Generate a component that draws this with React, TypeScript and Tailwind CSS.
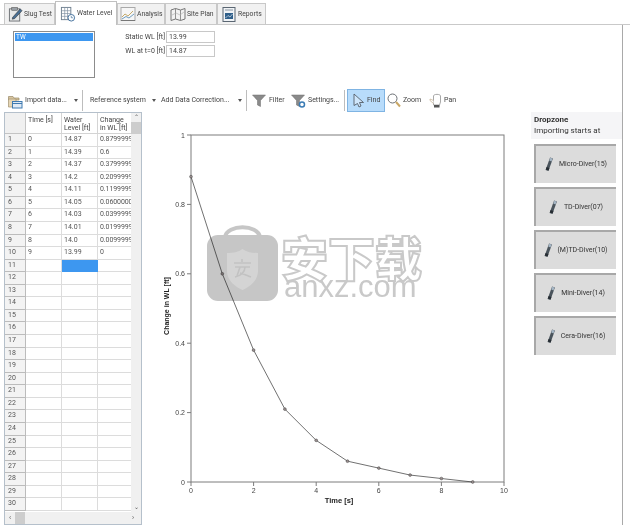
import React from "react";

const font = { fontFamily: 'Roboto, "Noto Sans CJK SC", sans-serif' };

function SlugIcon() {
  return (
    <svg width="15" height="16" viewBox="0 0 16 17" fill="none" className="shrink-0">
      <rect x="1.500" y="3" width="11" height="13" fill="#e8e8e8" stroke="#6d7175" />
      <rect x="4" y="1.500" width="6" height="3" fill="#9aa0a6" stroke="#555" strokeWidth="0.6" />
      <path d="M5 12 L13 3 L15 5 L7 13.500 L4.500 14 Z" fill="#4a6f94" stroke="#333" strokeWidth="0.6" />
    </svg>
  );
}
function LevelIcon() {
  return (
    <svg width="16" height="16" viewBox="0 0 17 17" fill="none" className="shrink-0">
      <rect x="1.500" y="1.500" width="10" height="13" fill="#fff" stroke="#6f7f8f" />
      <path d="M1.500 5H11.500M1.500 8H11.500M1.500 11H11.500M5 1.500V14.500M8 1.500V14.500" stroke="#7d8ea0" strokeWidth="0.7" />
      <circle cx="12" cy="12.500" r="3.500" fill="#fff" stroke="#3d6c99" />
      <path d="M12 10.500V12.500H14" stroke="#3d6c99" strokeWidth="0.7" />
    </svg>
  );
}
function AnalysisIcon() {
  return (
    <svg width="16" height="16" viewBox="0 0 16 16" fill="none" className="shrink-0">
      <rect x="1" y="1.500" width="14" height="13" fill="#f6f6f6" stroke="#a9a9a9" />
      <path d="M2 11L5 8L8 10L13 5" stroke="#c0a25a" strokeWidth="0.9" />
      <path d="M2 13L6 10.500L9 12L14 8" stroke="#5f92b8" strokeWidth="0.9" />
      <path d="M1 14.500H15" stroke="#777" />
    </svg>
  );
}
function MapIcon() {
  return (
    <svg width="16" height="15" viewBox="0 0 16 15" fill="none" className="shrink-0">
      <path d="M1 3L5.500 1.500L10.500 3L15 1.500V12L10.500 13.500L5.500 12L1 13.500Z" fill="#f2f2f2" stroke="#777" />
      <path d="M5.500 1.500V12M10.500 3V13.500" stroke="#777" strokeWidth="0.8" />
      <path d="M2 8L6 6L10 8L14 5" stroke="#aaa" strokeWidth="0.6" />
    </svg>
  );
}
function ReportIcon() {
  return (
    <svg width="14" height="15" viewBox="0 0 14 15" fill="none" className="shrink-0">
      <rect x="1" y="0.500" width="12" height="14" fill="#f0f3f6" stroke="#5a6672" />
      <rect x="3" y="6" width="8" height="6" fill="#2f5f8a" />
      <path d="M3.500 11L6 8.500L8 10L10.500 7" stroke="#dce7f0" strokeWidth="0.7" />
      <path d="M3 3H11" stroke="#8a96a2" />
    </svg>
  );
}
function FolderIcon() {
  return (
    <svg width="15" height="16" viewBox="0 0 15 16" fill="none" className="shrink-0">
      <path d="M0.500 3.500H5L6 5H11V7H0.500Z" fill="#d9c6a0" stroke="#9a8a68" strokeWidth="0.7" />
      <path d="M0.500 6L0.500 14H8V6Z" fill="#e6d6b5" stroke="#a0906e" strokeWidth="0.7" />
      <rect x="4.500" y="8.500" width="9.500" height="6.500" fill="#dfeaf5" stroke="#3f7ab0" />
      <path d="M4.500 10.500H14" stroke="#3f7ab0" />
    </svg>
  );
}
function Funnel({ gear }: { gear?: boolean }) {
  return (
    <svg width="15" height="14" viewBox="0 0 15 14" fill="none" className="shrink-0">
      <path d="M0.500 1H13.500L8.500 6.500V12.500L5.500 11V6.500Z" fill="#8a8a8a" stroke="#6d6d6d" strokeWidth="0.5" />
      {gear && <circle cx="11" cy="10.500" r="2.500" fill="#fff" stroke="#3b7cb5" strokeWidth="1.500" />}
    </svg>
  );
}
function CursorIcon() {
  return (
    <svg width="12" height="15" viewBox="0 0 12 15" fill="none" className="shrink-0">
      <path d="M1 1L10.500 9.500H6.500L8 13L6 14L4.500 10.500L1 12.500Z" fill="#cfe6fb" stroke="#555f69" strokeWidth="0.9" />
    </svg>
  );
}
function LensIcon() {
  return (
    <svg width="14" height="15" viewBox="0 0 14 15" fill="none" className="shrink-0">
      <circle cx="5.500" cy="5.500" r="4.500" fill="#fff" stroke="#6c7075" />
      <path d="M9 9L13 13.500" stroke="#c9a765" strokeWidth="2" />
    </svg>
  );
}
function HandIcon() {
  return (
    <svg width="14" height="15" viewBox="0 0 14 15" fill="none" className="shrink-0">
      <path d="M4.500 12V3C4.500 0.800 11.500 0.800 11.500 3V9L10.500 12Z" fill="#fff" stroke="#a8a8a8" />
      <path d="M4.500 7.500L1 6V7.500L4.500 10.500" fill="#fff" stroke="#c9b69a" strokeWidth="0.8" />
      <rect x="5" y="12" width="5.500" height="2.500" fill="#555" />
    </svg>
  );
}
function DiverIcon() {
  return (
    <svg width="9" height="16" viewBox="0 0 9 16" fill="none" className="shrink-0">
      <path d="M6.500 1L2 13.500" stroke="#4a545c" strokeWidth="3" />
      <path d="M6.400 1.200L5.400 4" stroke="#a5b6c5" strokeWidth="2.400" />
      <path d="M3 10.500L2.200 13" stroke="#262d33" strokeWidth="3" />
    </svg>
  );
}

function Tab({ label, icon, active, width, pad }: { label: string; icon: React.ReactNode; active?: boolean; width: string; pad: string }) {
  return (
    <div
      className={
        (active
          ? "flex items-center gap-[1px] h-[24px] -mb-px bg-white border border-b-0 border-[#c0c0c0] "
          : "flex items-center gap-[1px] h-[21px] bg-[#f1f1f1] border border-b-0 border-[#c8c8c8] ") +
        width +
        " " +
        pad
      }
    >
      {icon}
      <span className="text-[6.800px] text-[#444] whitespace-nowrap">{label}</span>
    </div>
  );
}

function Caret() {
  return <span className="w-0 h-0 border-x-[2.500px] border-x-transparent border-t-[3px] border-t-[#555]" />;
}

function Sep() {
  return <span className="w-px h-[21px] bg-[#bdbdbd]" />;
}

const rows: [string, string, string][] = [
  ["0", "14.87", "0.8799999"],
  ["1", "14.39", "0.6"],
  ["2", "14.37", "0.3799999"],
  ["3", "14.2", "0.2099999"],
  ["4", "14.11", "0.1199999"],
  ["5", "14.05", "0.0600000"],
  ["6", "14.03", "0.0399999"],
  ["7", "14.01", "0.0199999"],
  ["8", "14.0", "0.0099999"],
  ["9", "13.99", "0"],
];

function Grid() {
  return (
    <div className="w-[138px] h-[413px] ml-[4px] border border-[#b5c0cb] flex flex-col shrink-0">
      <div className="flex flex-1 min-h-0">
        <div className="flex-1 flex flex-col min-w-0">
          <div className="flex h-[21px] text-[7px] leading-[8px] text-[#444] shrink-0">
            <div className="w-[21px] bg-[#f0f0f0] border-r border-b border-[#c4c4c4]" />
            <div className="w-[36px] pl-[2px] pt-[3px] border-r border-b border-[#d4d4d4]">Time [s]</div>
            <div className="w-[36px] pl-[2px] pt-[3px] border-r border-b border-[#d4d4d4]">Water Level [ft]</div>
            <div className="flex-1 pl-[2px] pt-[3px] border-b border-[#d4d4d4]">Change in WL [ft]</div>
          </div>
          {Array.from({ length: 30 }, (_, i) => {
            const r = rows[i];
            return (
              <div key={i} className="flex h-[12.570px] text-[7px] leading-[11px] text-[#555] shrink-0">
                <div className="w-[21px] pl-[3px] bg-[#f3f3f3] border-r border-b border-[#bcbcbc]">{i + 1}</div>
                <div className="w-[36px] pl-[2px] border-r border-b border-[#dcdcdc]">{r?.[0]}</div>
                <div className={i === 10 ? "w-[36px] pl-[2px] bg-[#3d97f0]" : "w-[36px] pl-[2px] border-r border-b border-[#dcdcdc]"}>
                  {r?.[1]}
                </div>
                <div className="flex-1 min-w-0 pl-[2px] border-b border-[#dcdcdc] whitespace-nowrap tracking-[-0.100px]">{r?.[2]}</div>
              </div>
            );
          })}
        </div>
        <div className="w-[10px] bg-[#f0f0f0] flex flex-col items-center shrink-0">
          <span className="h-[7px] text-[6px] leading-[7px] text-[#555]">⌃</span>
          <span className="w-full h-[12px] mt-[2px] bg-[#cdcdcd]" />
          <span className="flex-1" />
          <span className="h-[9px] text-[6px] leading-[7px] text-[#555]">⌄</span>
        </div>
      </div>
      <div className="h-[12px] bg-[#f0f0f0] flex items-center shrink-0 text-[7px] text-[#555]">
        <span className="w-[10px] text-center">‹</span>
        <span className="w-[10px] h-full bg-[#cdcdcd]" />
        <span className="flex-1" />
        <span className="w-[16px] text-center">›</span>
      </div>
    </div>
  );
}

const data = [0.88, 0.6, 0.38, 0.21, 0.12, 0.06, 0.04, 0.02, 0.01, 0];
const px = (t: number) => 49 + t * 31.3;
const py = (v: number) => 370 - v * 347;

function Chart() {
  return (
    <svg width="389" height="413" viewBox="0 0 389 413" className="block shrink-0" style={{ fontFamily: '"Liberation Sans", sans-serif' }}>
      <rect x="49" y="23" width="313" height="347" fill="#fff" stroke="#7c7c7c" />
      {[0, 0.2, 0.4, 0.6, 0.8, 1].map((v) => (
        <g key={v}>
          <line x1="45" x2="49" y1={py(v)} y2={py(v)} stroke="#7c7c7c" />
          <text x="43" y={py(v) + 2.500} fontSize="7" fill="#444" textAnchor="end">{v}</text>
        </g>
      ))}
      {[0, 2, 4, 6, 8, 10].map((t) => (
        <g key={t}>
          <line x1={px(t)} x2={px(t)} y1="370" y2="374" stroke="#7c7c7c" />
          <text x={px(t)} y="381" fontSize="7" fill="#444" textAnchor="middle">{t}</text>
        </g>
      ))}
      <text x="197" y="391" fontSize="7.500" fontWeight="700" fill="#222" textAnchor="middle">Time [s]</text>
      <text transform="translate(27 194) rotate(-90)" fontSize="7" fontWeight="700" fill="#222" textAnchor="middle">Change in WL [ft]</text>
      <polyline points={data.map((v, i) => `${px(i)},${py(v)}`).join(" ")} fill="none" stroke="#333" strokeWidth="0.7" />
      {data.map((v, i) => (
        <circle key={i} cx={px(i)} cy={py(v)} r="1.400" fill="#9a8f8f" stroke="#444" strokeWidth="0.5" />
      ))}
    </svg>
  );
}

function Diver({ label, gap }: { label: string; gap: string }) {
  return (
    <div className={"w-[82px] h-[39px] bg-[#dcdcdc] border-t-2 border-l-2 border-[#a8a8a8] flex items-center justify-center " + gap}>
      <DiverIcon />
      <span className="text-[7px] text-[#333] whitespace-nowrap">{label}</span>
    </div>
  );
}

function Watermark() {
  return (
    <div className="absolute left-[207px] top-[221px] w-[290px] h-[82px] pointer-events-none mix-blend-multiply">
      <svg width="71" height="81" viewBox="0 0 71 81" className="absolute left-0 top-0">
        <path d="M18 16C20 3 51 3 53 16" fill="none" stroke="#c6c6c6" strokeWidth="4" />
        <rect x="0" y="14" width="71" height="66" rx="11" fill="#c6c6c6" />
        <path d="M20 32C27 32 31 31 35.500 28C40 31 44 32 51 32V50C51 60 42 66 35.500 69C29 66 20 60 20 50Z" fill="#d4d4d4" />
        <path d="M35 38V41M27 42H44M28 46H43M33 46L30 55M38 46C38 51 34 55 28 56M33 52C37 53 41 55 44 56" stroke="#c2c2c2" strokeWidth="1.600" fill="none" />
      </svg>
      <span
        className="absolute left-[74px] top-[5px] text-[47px] leading-[60px] font-black whitespace-nowrap text-white [-webkit-text-stroke:2px_#c9c9c9]"
        style={{ fontFamily: '"Noto Sans CJK SC", sans-serif' }}
      >
        安下载
      </span>
      <span
        className="absolute left-[77px] top-[45px] text-[31px] leading-[42px] whitespace-nowrap text-[#c9c9c9]"
        style={{ fontFamily: '"Liberation Sans", sans-serif' }}
      >
        anxz.com
      </span>
    </div>
  );
}

export default function App() {
  return (
    <div className="relative w-[630px] h-[525px] overflow-hidden bg-white flex flex-col" style={font}>
      <div className="h-[25px] flex items-end pl-[4px] border-b border-[#c9c9c9] shrink-0">
        <Tab label="Slug Test" icon={<SlugIcon />} width="w-[51px]" pad="pl-[3px]" />
        <Tab label="Water Level" icon={<LevelIcon />} active width="w-[62px]" pad="pl-[4px]" />
        <Tab label="Analysis" icon={<AnalysisIcon />} width="w-[48px]" pad="pl-[2px]" />
        <Tab label="Site Plan" icon={<MapIcon />} width="w-[52px]" pad="pl-[4px]" />
        <Tab label="Reports" icon={<ReportIcon />} width="w-[49px]" pad="pl-[4px] gap-[2px]" />
      </div>

      <div className="flex-1 min-h-0 w-[623px] border-r border-[#a9a9a9] flex flex-col">
        <div className="h-[64px] pt-[6px] flex shrink-0">
          <div className="ml-[13px] w-[82px] h-[47px] border border-[#8c8c8c] p-px">
            <div className="h-[8px] bg-[#3d97f0] text-[6.500px] leading-[8px] text-white pl-[1px]">TW</div>
          </div>
          <div className="ml-[23px] w-[97px] flex flex-col gap-[2px] text-[7px] text-[#444]">
            <div className="flex items-center justify-end gap-[1px]">
              <span className="whitespace-nowrap">Static WL [ft]</span>
              <div className="w-[49px] h-[12px] shrink-0 border border-[#c8c8c8] pl-[2px] leading-[10px]">13.99</div>
            </div>
            <div className="flex items-center justify-end gap-[1px]">
              <span className="whitespace-nowrap">WL at t=0 [ft]</span>
              <div className="w-[49px] h-[12px] shrink-0 border border-[#c8c8c8] pl-[2px] leading-[10px]">14.87</div>
            </div>
          </div>
        </div>

        <div className="h-[23px] flex items-center pl-[8px] text-[7px] text-[#444] shrink-0 whitespace-nowrap">
          <FolderIcon />
          <span className="ml-[2px] w-[46px]">Import data...</span>
          <span className="ml-[3px] flex"><Caret /></span>
          <span className="ml-[4px] flex"><Sep /></span>
          <span className="ml-[7px] w-[55px]">Reference system</span>
          <span className="ml-[7px] flex"><Caret /></span>
          <span className="ml-[5px] w-[72px]">Add Data Correction...</span>
          <span className="ml-[5px] flex"><Caret /></span>
          <span className="ml-[4px] flex"><Sep /></span>
          <span className="ml-[5px] flex"><Funnel /></span>
          <span className="ml-[2px] w-[18px]">Filter</span>
          <span className="ml-[4px] flex"><Funnel gear /></span>
          <span className="ml-[2px] w-[32px]">Settings...</span>
          <span className="ml-[4px] flex"><Sep /></span>
          <div className="ml-[2px] w-[38px] h-[23px] bg-[#b8dcfb] border border-[#7fb4e3] flex items-center pl-[5px] gap-[2px]">
            <CursorIcon />
            <span>Find</span>
          </div>
          <span className="ml-[2px] flex"><LensIcon /></span>
          <span className="ml-[2px] w-[22px]">Zoom</span>
          <span className="ml-[4px] flex"><HandIcon /></span>
          <span className="ml-[1px]">Pan</span>
        </div>

        <div className="flex flex-1 min-h-0">
          <Grid />
          <Chart />
          <div className="flex-1 min-w-0 flex flex-col">
            <div className="h-[27px] bg-[#f5f5f7] pl-[3px] pt-[2px] leading-[11px] text-[8px] text-[#333] whitespace-nowrap">
              <div className="font-bold">Dropzone</div>
              <div>Importing starts at</div>
            </div>
            <div className="pl-[3px] pt-[5px] flex flex-col gap-[4px]">
              <Diver label="Micro-Diver(15)" gap="gap-[5px]" />
              <Diver label="TD-Diver(07)" gap="gap-[6px]" />
              <Diver label="(M)TD-Diver(10)" gap="gap-[4px]" />
              <Diver label="Mini-Diver(14)" gap="gap-[5px]" />
              <Diver label="Cera-Diver(16)" gap="gap-[5px]" />
            </div>
          </div>
        </div>
      </div>
      <Watermark />
    </div>
  );
}
